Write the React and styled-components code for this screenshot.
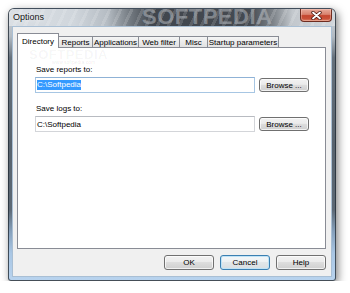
import React from 'react';
import styled, { createGlobalStyle } from 'styled-components';

const Global = createGlobalStyle`
  html, body { margin: 0; padding: 0; background: #ffffff; }
  body { font-family: "Liberation Sans", Arial, sans-serif; }
`;

const Window = styled.div`
  position: relative;
  box-sizing: border-box;
  margin: 8px 0 0 8px;
  width: 328px;
  height: 273px;
  border: 1px solid rgba(35, 45, 55, 0.8);
  border-radius: 6px 6px 3px 3px;
  background: linear-gradient(
    180deg,
    #cdd3d9 0%,
    #b3bbc3 10%,
    #66717c 18%,
    #58636e 50%,
    #5d6975 74%,
    #86a0bb 82%,
    #a9c6e4 90%,
    #b8d3ee 100%
  );
  box-shadow: 2px 3px 9px rgba(0, 0, 0, 0.5);
  display: flex;
  flex-direction: column;
  overflow: hidden;
`;

const TitleBar = styled.div`
  position: relative;
  height: 17px;
  flex: none;
  display: flex;
  align-items: flex-start;
  background:
    repeating-linear-gradient(115deg, rgba(255, 255, 255, 0.14) 0 3px, rgba(255, 255, 255, 0) 3px 10px),
    linear-gradient(
      90deg,
      #dadfe4 0%,
      #d0d6dc 20%,
      #b6bdc4 30%,
      #747b82 37%,
      #41464d 44%,
      #454a51 74%,
      #7d8389 81%,
      #c3c8cd 87%,
      #d1d6db 100%
    );
`;

const Watermark = styled.div`
  position: absolute;
  left: 133px;
  top: -3px;
  font-size: 22px;
  line-height: 22px;
  font-weight: bold;
  letter-spacing: 0.5px;
  color: rgba(170, 175, 181, 0.6);
  white-space: nowrap;
  pointer-events: none;
`;

const Title = styled.span`
  position: relative;
  padding-left: 4px;
  line-height: 17px;
  font-size: 9px;
  color: #151515;
  text-shadow: 0 0 5px rgba(255, 255, 255, 0.9);
`;

const CloseButton = styled.div`
  position: relative;
  margin-left: auto;
  margin-right: 3px;
  width: 32px;
  height: 13px;
  box-sizing: border-box;
  border: 1px solid #6e2c20;
  border-top: none;
  border-radius: 0 0 4px 4px;
  background: linear-gradient(
    180deg,
    #e8ab9b 0%,
    #d8826e 45%,
    #c4462f 55%,
    #c95239 82%,
    #df8a70 100%
  );
  box-shadow: inset 0 0 0 1px rgba(255, 220, 210, 0.35);
  display: flex;
  align-items: center;
  justify-content: center;
`;

const Client = styled.div`
  flex: 1;
  min-height: 0;
  margin: 0 3px 3px 3px;
  border: 1px solid #a9bfd4;
  background: #f0f0f0;
  display: flex;
  flex-direction: column;
  padding: 6px 5px 6px 4px;
`;

const TabStrip = styled.div`
  position: relative;
  z-index: 1;
  height: 14px;
  flex: none;
  display: flex;
  align-items: flex-end;
`;

const Tab = styled.div`
  position: relative;
  z-index: ${(p) => (p.$active ? 2 : 1)};
  box-sizing: border-box;
  width: ${(p) => p.$w}px;
  height: ${(p) => (p.$active ? 15 : 11)}px;
  margin-bottom: ${(p) => (p.$active ? -1 : 0)}px;
  margin-left: ${(p) => (p.$first ? 0 : -1)}px;
  border: 1px solid #898c95;
  border-bottom: none;
  background: ${(p) => (p.$active ? '#ffffff' : 'linear-gradient(180deg, #f5f5f5 0%, #ebebeb 50%, #e2e2e2 100%)')};
  font-size: 8px;
  color: #000;
  display: flex;
  align-items: center;
  justify-content: center;
  white-space: nowrap;
`;

const Panel = styled.div`
  position: relative;
  flex: 1;
  min-height: 0;
  border: 1px solid #898c95;
  background: #ffffff;
  padding: 17px 0 0 17px;
  display: flex;
  flex-direction: column;
`;

const PanelMark = styled.div`
  position: absolute;
  left: 11px;
  top: 0px;
  font-size: 13px;
  line-height: 13px;
  font-weight: bold;
  letter-spacing: 0.5px;
  color: rgba(0, 0, 0, 0.045);
  pointer-events: none;
`;

const PanelUrl = styled.div`
  position: absolute;
  left: 34px;
  top: 12px;
  font-size: 5px;
  line-height: 5px;
  color: rgba(0, 0, 0, 0.1);
  pointer-events: none;
`;

const Field = styled.div`
  position: relative;
  display: flex;
  flex-direction: column;
  margin-top: ${(p) => p.$gap || 0}px;
`;

const Label = styled.div`
  font-size: 8px;
  line-height: 10px;
  padding-left: 1px;
  margin-bottom: 2px;
  color: #000;
`;

const Row = styled.div`
  display: flex;
  align-items: center;
  gap: 4px;
`;

const TextBox = styled.div`
  box-sizing: border-box;
  width: 220px;
  height: 16px;
  border: 1px solid ${(p) => (p.$focused ? '#a7c6e3' : '#d3d5d9')};
  border-top-color: ${(p) => (p.$focused ? '#8fb2d6' : '#b8bbc1')};
  background: #ffffff;
  padding: 0 1px;
  display: flex;
  align-items: center;
  font-size: 8px;
  color: #000;
`;

const Selected = styled.span`
  background: #3399ff;
  color: #ffffff;
  line-height: 10px;
`;

const Button = styled.button`
  box-sizing: border-box;
  width: ${(p) => p.$w}px;
  height: ${(p) => p.$h}px;
  padding: 0;
  border: 1px solid ${(p) => (p.$default ? '#3c7fb1' : '#707070')};
  border-radius: 3px;
  background: ${(p) =>
    p.$default
      ? 'linear-gradient(180deg, #f4f7f9 0%, #edf0f2 45%, #e2e6e9 50%, #d9dee2 100%)'
      : 'linear-gradient(180deg, #f2f2f2 0%, #ebebeb 45%, #dddddd 50%, #cfcfcf 100%)'};
  box-shadow: inset 0 0 0 1px ${(p) => (p.$default ? '#bfe3f7' : 'rgba(255,255,255,0.7)')};
  font-family: "Liberation Sans", Arial, sans-serif;
  font-size: 8px;
  color: #000;
  flex: none;
`;

const Footer = styled.div`
  flex: none;
  display: flex;
  justify-content: flex-end;
  gap: 6px;
  margin-top: 6px;
`;

const tabs = [
  { label: 'Directory', w: 42 },
  { label: 'Reports', w: 35 },
  { label: 'Applications', w: 47 },
  { label: 'Web filter', w: 42 },
  { label: 'Misc', w: 29 },
  { label: 'Startup parameters', w: 72 },
];

export default function App() {
  return (
    <>
      <Global />
      <Window>
        <TitleBar>
          <Watermark>SOFTPEDIA</Watermark>
          <Title>Options</Title>
          <CloseButton>
            <svg width="11" height="9" viewBox="0 0 11 9">
              <path d="M2 1.5 L9 7.5 M9 1.5 L2 7.5" stroke="#4a1a12" strokeWidth="3.4" strokeLinecap="round" />
              <path d="M2 1.5 L9 7.5 M9 1.5 L2 7.5" stroke="#ffffff" strokeWidth="1.8" strokeLinecap="round" />
            </svg>
          </CloseButton>
        </TitleBar>
        <Client>
          <TabStrip>
            {tabs.map((t, i) => (
              <Tab key={t.label} $w={t.w} $first={i === 0} $active={i === 0}>
                {t.label}
              </Tab>
            ))}
          </TabStrip>
          <Panel>
            <PanelMark>SOFTPEDIA</PanelMark>
            <PanelUrl>www.softpedia.com</PanelUrl>
            <Field>
              <Label>Save reports to:</Label>
              <Row>
                <TextBox $focused>
                  <Selected>C:\Softpedia</Selected>
                </TextBox>
                <Button $w={50} $h={14}>Browse ...</Button>
              </Row>
            </Field>
            <Field $gap={11}>
              <Label>Save logs to:</Label>
              <Row>
                <TextBox>C:\Softpedia</TextBox>
                <Button $w={50} $h={14}>Browse ...</Button>
              </Row>
            </Field>
          </Panel>
          <Footer>
            <Button $w={50} $h={15}>OK</Button>
            <Button $w={50} $h={15} $default>Cancel</Button>
            <Button $w={50} $h={15}>Help</Button>
          </Footer>
        </Client>
      </Window>
    </>
  );
}
